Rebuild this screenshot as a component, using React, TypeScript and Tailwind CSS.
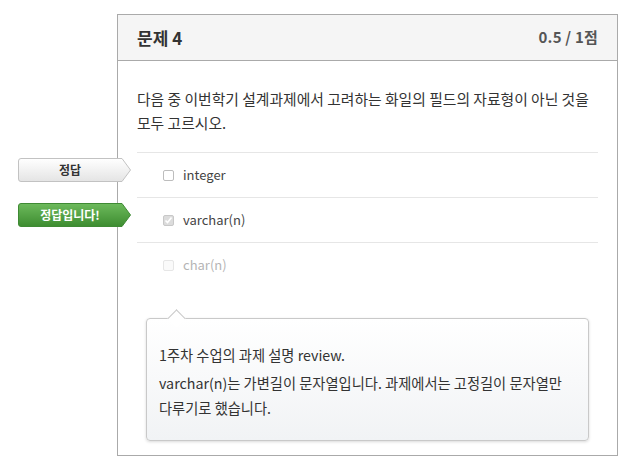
const font = { fontFamily: '"Noto Sans CJK KR", "Noto Sans", sans-serif' };

function Tag({ label, green }: { label: string; green?: boolean }) {
  const id = green ? "tag-green" : "tag-white";
  return (
    <div className="absolute left-[-119px] top-[5px] w-[113px] h-[24px]">
      <svg width="113" height="24" viewBox="0 0 113 24" className="absolute inset-0">
        <defs>
          <linearGradient id={id} x1="0" y1="0" x2="0" y2="1">
            <stop offset="0" stopColor={green ? "#6dba5c" : "#ffffff"} />
            <stop offset="1" stopColor={green ? "#3d8c30" : "#e4e4e4"} />
          </linearGradient>
        </defs>
        <path
          d="M3 0.5 H104 L112.5 12 L104 23.5 H3 Q0.5 23.5 0.5 21 V3 Q0.5 0.5 3 0.5 Z"
          fill={`url(#${id})`}
          stroke={green ? "#3f8a34" : "#c2c2c2"}
        />
      </svg>
      <span
        className={`relative flex h-full w-[104px] items-center justify-center text-[12px] font-bold ${
          green ? "text-white" : "text-[#333]"
        }`}
      >
        {label}
      </span>
    </div>
  );
}

function Check({ state }: { state: "off" | "on" | "disabled" }) {
  if (state === "on")
    return (
      <span className="flex h-[11px] w-[11px] items-center justify-center rounded-[2px] border border-[#c8c8c8] bg-[#dcdcdc]">
        <svg width="9" height="9" viewBox="0 0 9 9">
          <path d="M1.5 4.5 L3.5 6.5 L7.5 1.5" fill="none" stroke="#fff" strokeWidth="1.6" />
        </svg>
      </span>
    );
  return (
    <span
      className={`h-[11px] w-[11px] rounded-[2px] border ${
        state === "off" ? "border-[#bdbdbd] bg-white" : "border-[#e6e6e6] bg-[#fafafa]"
      }`}
    />
  );
}

const options = [
  { text: "integer", state: "off" as const, tag: "정답", green: false },
  { text: "varchar(n)", state: "on" as const, tag: "정답입니다!", green: true },
  { text: "char(n)", state: "disabled" as const },
];

export default function App() {
  return (
    <div className="w-[628px] h-[475px] bg-white pt-[14px] pl-[117px]" style={font}>
      <div className="w-[501px] border border-[#aaaaaa]">
        <div className="flex h-[46px] items-center justify-between border-b border-[#aaaaaa] bg-[#f5f5f5] px-[19px]">
          <span className="text-[17px] font-bold text-[#333]">문제 4</span>
          <span className="text-[15px] font-bold tracking-[0.2px] text-[#555]">0.5 / 1점</span>
        </div>
        <div className="px-[19px] pt-[26px] pb-[14px]">
          <p className="break-keep text-[14.8px] leading-[24px] text-[#333]">
            다음 중 이번학기 설계과제에서 고려하는 화일의 필드의 자료형이 아닌 것을 모두 고르시오.
          </p>
          <div className="mt-[17px]">
            {options.map((o) => (
              <div
                key={o.text}
                className="relative flex h-[45px] items-center border-t border-[#e6e6e6] pl-[26px]"
              >
                {o.tag && <Tag label={o.tag} green={o.green} />}
                <Check state={o.state} />
                <span
                  className={`ml-[9px] text-[13px] ${
                    o.state === "disabled" ? "text-[#b5b5b5]" : "text-[#444]"
                  }`}
                >
                  {o.text}
                </span>
              </div>
            ))}
          </div>
          <div className="relative mx-[9px] mt-[31px] rounded-[4px] border border-[#c9c9c9] bg-gradient-to-b from-white to-[#f1f3f5] px-[12px] pt-[23px] pb-[20px] shadow-[0_1px_3px_rgba(0,0,0,0.15)]">
            <span className="absolute left-[23px] top-[-7px] h-[13px] w-[13px] rotate-45 border-l border-t border-[#c9c9c9] bg-white" />
            <p className="break-keep text-[14.25px] leading-[25px] text-[#333]">1주차 수업의 과제 설명 review.</p>
            <p className="mt-[3px] break-keep text-[14.25px] leading-[25px] text-[#333]">
              varchar(n)는 가변길이 문자열입니다. 과제에서는 고정길이 문자열만 다루기로 했습니다.
            </p>
          </div>
        </div>
      </div>
    </div>
  );
}
